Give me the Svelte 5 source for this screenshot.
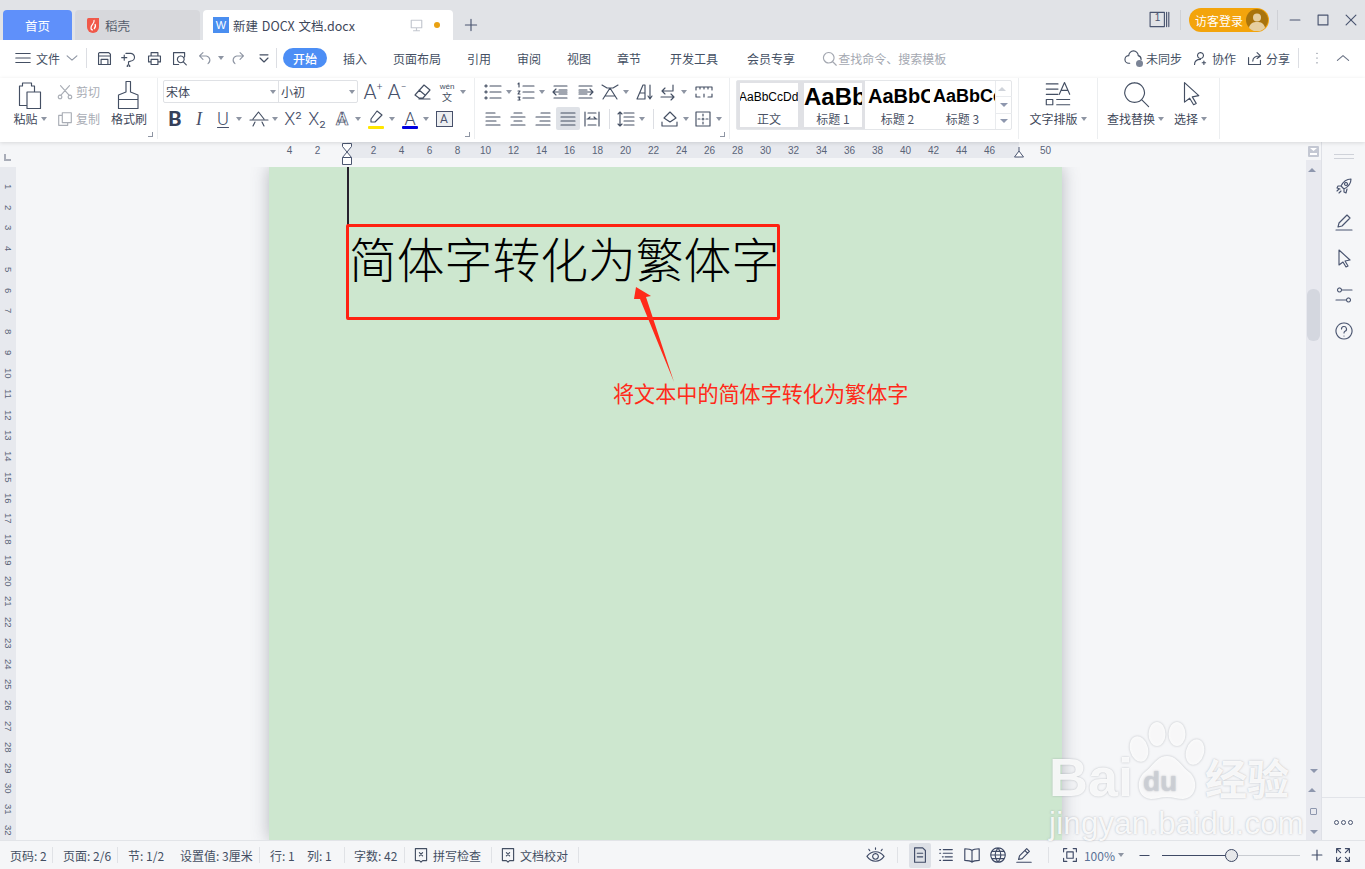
<script>
  const icons = {
    hamb: 'M2 5h16M2 10h16M2 15h16',
    chev: 'M3 7l7 6 7-6',
    chevup: 'M3 13l7-6 7 6',
    save: 'M4 3h11l2 2v12H3V4zM6 17v-6h8v6M3 7h14',
    saveas: 'M7 4h5a4.5 4.5 0 0 1 1 9l-3 1v2M2 9h6M5 6v6M10 17.5a1.5 1.5 0 1 0 .01 0',
    print: 'M6 7V3h8v4M6 14H3V7h14v7h-3M6 11h8v6H6z',
    preview: 'M16 8V3H3v14h6M11.5 7a4 4 0 1 0 .01 0M14.5 14l3.5 3.5',
    undo: 'M7 3L3 7l4 4M3 7h8a5 5 0 0 1 2 9',
    redo: 'M13 3l4 4-4 4M17 7H9a5 5 0 0 0-2 9',
    more: 'M5 6h10M5 10l5 5 5-5',
    cloud: 'M6 15H5a4 4 0 0 1 0-8 5 5 0 0 1 10 0 4 4 0 0 1 3 4',
    user: 'M10 3a3.5 3.5 0 1 0 .01 0M3 17c0-4 3-6 7-6M14 13v4M12 15h4',
    share: 'M3 9v8h14v-5M8 13c0-4 3-6 8-6M13 3l4 4-4 3',
    vdots: 'M10 4v.01M10 10v.01M10 16v.01',
    paste: 'M3 4h2V2h6v2h2v4M3 4v13h5M8 8h9v11H8z',
    cut: 'M5 3l9 10M15 3L6 13M4.5 13.5a2 2 0 1 0 .01 0M15.5 13.5a2 2 0 1 0 .01 0',
    copy: 'M7 3h10v11H7zM7 6H3v11h10v-3',
    brush: 'M8 1h3v7l5 2v3H3v-3l5-2zM3 13h13v6H3z',
    eraser: 'M11 3l6 5-7 8H6l-4-3zM6 8l6 5M6 17h11',
    marker: 'M11 2l5 4-7 7H5v-3z',
    strike: 'M4 10L9.5 3 15 10M1 11h18M4 17l2-4M15 17l-2-4',
    bullets: 'M7 4h11M7 10h11M7 16h11M3 3a1 1 0 1 0 .01 0M3 9a1 1 0 1 0 .01 0M3 15a1 1 0 1 0 .01 0',
    numbers: 'M7 4h11M7 10h11M7 16h11M2 2l1-1v4M2 9h2l-2 3h2M2 15h2l-1 1 1 2H2',
    outdent: 'M4 4h13M9 8h8M3 10h14M3 10l3-3M3 10l3 3M9 12h8M4 16h13',
    indent: 'M3 4h13M3 8h8M3 10h14M17 10l-3-3M17 10l-3 3M3 12h8M3 16h13',
    mixed: 'M2 3l5 3h6l5-3M3 17L10 6l7 11M5 14h10',
    sort: 'M2 17L8 3h2v14H2M5 11h5M15 3v14M13 14l2 3 2-3',
    wrap: 'M15 3v6H4M7 6L4 9l3 3M3 15h13M13 12l3 3-3 3',
    ruler: 'M2 5h16v3M2 5v3M6 5v2M10 5v2M14 5v2M2 12v3h4M18 12v3h-4M10 12v3',
    aleft: 'M3 4h9M3 8h14M3 12h10M3 16h14',
    acenter: 'M6 4h8M3 8h14M6 12h8M3 16h14',
    aright: 'M8 4h9M3 8h14M7 12h10M3 16h14',
    ajust: 'M3 4h14M3 8h14M3 12h14M3 16h14',
    adist: 'M3 3v14M17 3v14M6 4h8M5 10h10M6 16h8M6 10l2-2M14 10l-2-2',
    spacing: 'M4 3v14M2 5l2-2 2 2M2 15l2 2 2-2M8 4h10M8 8h10M8 12h10M8 16h10',
    shade: 'M4 9l6-6 6 6-6 4zM2 13v4h15v-4',
    border: 'M3 3h14v14H3zM10 5v2M10 9v2M10 13v2M5 10h2M9 10h2M13 10h2',
    arrange: 'M1 3h9M1 7h9M1 11h9M1 15h5v4H1zM11 11l4-9 4 9M12.5 8h5M9 15h10M9 19h10',
    search: 'M9 2a7 7 0 1 0 .01 0M14 14l5 5',
    cursor: 'M5 2l11 10-5 1 3 5-2 1-3-5-4 3z',
    rocket: 'M17 3c-5 0-8 3-10 7l3 3c4-2 7-5 7-10zM7 10l-3 0-1 2 3 1M10 13v3l2 1 1-4M12 6.5a1.5 1.5 0 1 0 .01 0M3 15l2-2M5 17l2-2',
    pen: 'M4 15l1-4 8-8 3 3-8 8zM2 18h16',
    sliders: 'M8 5h10M2 15h10M5.5 3a2 2 0 1 0 .01 0M14.5 13a2 2 0 1 0 .01 0',
    help: 'M10 2a8 8 0 1 0 .01 0M7.5 8a2.5 2.5 0 1 1 3.5 2.3c-.7.4-1 .9-1 1.7M10 15v.01',
    check: 'M3 2h14v15h-5l-2 2-2-2H3zM8 7l4 4M12 7l-4 4',
    eye: 'M1 11s3.500-5 9-5 9 5 9 5-3.500 5-9 5-9-5-9-5zM10 8a3 3 0 1 0 .01 0M4 5L3 3.500M10 3.500V2M16 5l1-1.500',
    page: 'M4 2h9l3 3v13H4zM7 8h6M7 12h6',
    outline: 'M3 4h1M7 4h10M3 8h1M7 8h10M6 12h1M9 12h8M3 16h1M7 16h10',
    book: 'M10 5C8 3 5 3 2 3v13c3 0 6 0 8 2 2-2 5-2 8-2V3c-3 0-6 0-8 2zM10 5v13',
    globe: 'M10 2a8 8 0 1 0 .01 0M2 10h16M3 6h14M3 14h14M10 2c-4 5-4 11 0 16M10 2c4 5 4 11 0 16',
    write: 'M4 15l1-4 8-8 3 3-8 8zM2 18h16M11 5l3 3',
    fit: 'M2 6V2h4M14 2h4v4M2 14v4h4M18 14v4h-4M6 6h8v8H6z',
    full: 'M2 7V2h5M2 2l5 5M13 2h5v5M18 2l-5 5M2 13v5h5M2 18l5-5M18 13v5h-5M18 18l-5-5',
    plus: 'M3 10h14M10 3v14',
    min: 'M3 10h14',
    max: 'M3 3h14v14H3z',
    close: 'M3 3l14 14M17 3L3 17',
    monitor: 'M3 3h14v10H3zM10 13v4M6 17h8',
    tabs: 'M1 3h13v13H1zM16 3v13M18 3v13'
  }

  const quick = [
    { i: 'save', w: 24, s: 17 },
    { i: 'saveas', w: 26, s: 17 },
    { i: 'print', w: 25, s: 17 },
    { i: 'preview', w: 26, s: 17 },
    { i: 'undo', w: 32, c: 1, dim: 1, s: 17 },
    { i: 'redo', w: 27, dim: 1, s: 17 },
    { i: 'more', w: 24, s: 16 }
  ]
  const tabs = ['插入', '页面布局', '引用', '审阅', '视图', '章节', '开发工具', '会员专享']

  const fontTop = [
    { t: 'A', sup: '+', cls: 'lg', w: 24 },
    { t: 'A', sup: '−', cls: 'lg', w: 26 },
    { i: 'eraser', w: 24 },
    { wen: 1, w: 34, c: 1 }
  ]
  const fontBottom = [
    { t: 'B', cls: 'bold', w: 24 },
    { t: 'I', cls: 'ital', w: 24 },
    { t: 'U', cls: 'under', w: 36, c: 1 },
    { i: 'strike', w: 34, c: 1 },
    { t: 'X²', w: 24 },
    { t: 'X₂', w: 25 },
    { t: 'A', cls: 'ghost', w: 34, c: 1 },
    { i: 'marker', bar: '#ffe600', w: 34, c: 1 },
    { t: 'A', bar: '#0000e0', w: 34, c: 1 },
    { t: 'A', cls: 'boxed', w: 26 }
  ]
  const paraTop = [
    { i: 'bullets', w: 33, c: 1 },
    { i: 'numbers', w: 34, c: 1 },
    { i: 'outdent', w: 26 },
    { i: 'indent', w: 24 },
    { i: 'mixed', w: 35, c: 1 },
    { i: 'sort', w: 23 },
    { i: 'wrap', w: 36, c: 1 },
    { i: 'ruler', w: 24 }
  ]
  const paraBottom = [
    { i: 'aleft', w: 25 },
    { i: 'acenter', w: 25 },
    { i: 'aright', w: 25 },
    { i: 'ajust', w: 24, on: 1 },
    { i: 'adist', w: 24 },
    { sep: 1, w: 10 },
    { i: 'spacing', w: 34, c: 1 },
    { sep: 1, w: 10 },
    { i: 'shade', w: 33, c: 1 },
    { i: 'border', w: 34, c: 1 }
  ]
  const styles = [
    { p: 'AaBbCcDd', l: '正文', cls: 's0' },
    { p: 'AaBb', l: '标题 1', cls: 's1' },
    { p: 'AaBbC', l: '标题 2', cls: 's2' },
    { p: 'AaBbCc', l: '标题 3', cls: 's3' }
  ]

  const rulerNums = ['4', '2', '', '2', '4', '6', '8', '10', '12', '14', '16', '18', '20', '22', '24', '26', '28', '30', '32', '34', '36', '38', '40', '42', '44', '46', '', '50']
  const sideNums = Array.from({ length: 32 }, (_, i) => i + 1)
  const sideTools = ['rocket', 'pen', 'cursor', 'sliders', 'help']
  const viewTools = ['page', 'outline', 'book', 'globe', 'write']

  const statusItems = [
    { t: '页码: 2', w: 43, m: 10, sep: 1 },
    { t: '页面: 2/6', w: 55, m: 10, sep: 1 },
    { t: '节: 1/2', w: 52, m: 0 },
    { t: '设置值: 3厘米', w: 80, m: 10, sep: 1 },
    { t: '行: 1', w: 37, m: 0 },
    { t: '列: 1', w: 38, m: 9, sep: 1 },
    { t: '字数: 42', w: 51, m: 8, sep: 1 },
    { t: '拼写检查', w: 79, m: 8, sep: 1, check: 1 },
    { t: '文档校对', w: 79, m: 0, sep: 1, check: 1 }
  ]
</script>

{#snippet ic(name, size = 20)}
  <svg class="ic" width={size} height={size} viewBox="0 0 20 20"><path d={icons[name]} /></svg>
{/snippet}

{#snippet caret()}
  <i class="caret"></i>
{/snippet}

{#snippet cells(list)}
  {#each list as c}
    {#if c.sep}
      <span class="cell" style:width="{c.w}px"><i class="vsep"></i></span>
    {:else}
      <span class="cell" class:on={c.on} class:dim={c.dim} style:width="{c.w}px">
        <span class="glyph">
          {#if c.i}
            {@render ic(c.i, c.s ?? 20)}
          {:else if c.wen}
            <span class="wen"><small>wén</small>文</span>
          {:else}
            <span class={['gt', c.cls]}>{c.t}{#if c.sup}<sup>{c.sup}</sup>{/if}</span>
          {/if}
          {#if c.bar}<i class="bar" style:background={c.bar}></i>{/if}
        </span>
        {#if c.c}{@render caret()}{/if}
      </span>
    {/if}
  {/each}
{/snippet}

<div class="app">
  <header class="titlebar">
    <div class="tab home">首页</div>
    <div class="tab shell">
      <svg width="12" height="15" viewBox="0 0 12 15"><path d="M0 1.500Q0 0 1.500 0H12v9a6 6 0 0 1-12 0z" fill="#f0594a" /><path d="M7 2C8 6 4 6 4 10c0 1 1 2 2 2M8 6c1 2 0 4-1 5" fill="none" stroke="#fff" stroke-width="1.200" /></svg>
      稻壳
    </div>
    <div class="tab doc">
      <span class="wlogo">W</span>
      <span class="docname">新建 DOCX 文档.docx</span>
      <span class="mon">{@render ic('monitor', 15)}</span>
      <i class="dot"></i>
    </div>
    <span class="newtab">{@render ic('plus', 16)}</span>
    <div class="winbtns">
      <span class="tabcount">{@render ic('tabs', 22)}<b>1</b></span>
      <i class="tsep"></i>
      <div class="login">
        访客登录
        <svg width="22" height="22" viewBox="0 0 22 22"><circle cx="11" cy="11" r="11" fill="#a9740c" /><circle cx="11" cy="8.500" r="4" fill="#e6cfa0" /><path d="M3 19c1-5 4-6 8-6s7 1 8 6a11 11 0 0 1-16 0z" fill="#e6cfa0" /></svg>
      </div>
      <i class="tsep last"></i>
      <span class="wb">{@render ic('min', 14)}</span>
      <span class="wb">{@render ic('max', 14)}</span>
      <span class="wb">{@render ic('close', 14)}</span>
    </div>
  </header>

  <nav class="menu">
    <span class="hamb">{@render ic('hamb', 18)}</span>
    <span class="file">文件</span>
    <span class="filechev">{@render ic('chev', 14)}</span>
    <i class="msep first"></i>
    <div class="quick">{@render cells(quick)}</div>
    <i class="msep"></i>
    <span class="pill">开始</span>
    <div class="tabs">
      {#each tabs as t}<span class="mtab">{t}</span>{/each}
    </div>
    <div class="search">{@render ic('search', 15)}查找命令、搜索模板</div>
    <div class="actions">
      <span class="act">
        <span class="cloud">{@render ic('cloud', 19)}<i></i></span>未同步
      </span>
      <span class="act">{@render ic('user', 17)}协作</span>
      <span class="act lastact">{@render ic('share', 17)}分享</span>
      <i class="msep"></i>
      <span class="vd">{@render ic('vdots', 16)}</span>
      <span class="up">{@render ic('chevup', 16)}</span>
    </div>
  </nav>

  <section class="ribbon">
    <div class="grp clip">
      <div class="big paste">
        {@render ic('paste', 30)}
        <span class="lbl">粘贴{@render caret()}</span>
      </div>
      <div class="mini">
        <span class="miniitem">{@render ic('cut', 18)}剪切</span>
        <span class="miniitem">{@render ic('copy', 18)}复制</span>
      </div>
      <div class="big brush">
        {@render ic('brush', 30)}
        <span class="lbl">格式刷</span>
      </div>
      <i class="corner"></i>
    </div>

    <div class="grp font">
      <div class="row">
        <div class="combo">
          <span class="cb name">宋体{@render caret()}</span>
          <span class="cb size">小初{@render caret()}</span>
        </div>
        <div class="rowcells">{@render cells(fontTop)}</div>
      </div>
      <div class="row">{@render cells(fontBottom)}</div>
      <i class="corner"></i>
    </div>

    <div class="grp para">
      <div class="row">{@render cells(paraTop)}</div>
      <div class="row">{@render cells(paraBottom)}</div>
      <i class="corner"></i>
    </div>

    <div class="grp gallerygrp">
      <div class="gallery">
        {#each styles as s}
          <div class={['style', s.cls]}>
            <span class="prev">{s.p}</span>
            <span class="slabel">{s.l}</span>
          </div>
        {/each}
        <div class="gscroll">
          <span><i class="tri up"></i></span>
          <span><i class="tri"></i></span>
          <span><i class="tri"></i></span>
        </div>
      </div>
    </div>

    <div class="grp arrange">
      <div class="big">
        {@render ic('arrange', 26)}
        <span class="lbl">文字排版{@render caret()}</span>
      </div>
    </div>

    <div class="grp find">
      <div class="big">
        {@render ic('search', 28)}
        <span class="lbl">查找替换{@render caret()}</span>
      </div>
      <div class="big">
        {@render ic('cursor', 26)}
        <span class="lbl">选择{@render caret()}</span>
      </div>
    </div>
  </section>

  <div class="work">
    <div class="docside">
      <div class="hruler">
        <i class="ltab"></i>
        <div class="hnums">
          {#each rulerNums as n}<span>{n}</span>{/each}
        </div>
        <svg class="mark left" width="12" height="22" viewBox="0 0 12 22"><path d="M1.500.5h9v3L6 9 1.500 3.500zM6 9l4.500 5.500v7h-9v-7zM1.500 14.500h9" fill="#fff" stroke="#4a5570" /></svg>
        <svg class="mark right" width="12" height="12" viewBox="0 0 12 12"><path d="M6 1v4L1.500 11h9L6 5" fill="#fff" stroke="#4a5570" /></svg>
      </div>
      <div class="docrow">
        <div class="vruler">
          {#each sideNums as n}<span>{n}</span>{/each}
        </div>
        <div class="canvas">
          <div class="page">
            <i class="cursorline"></i>
            <div class="redbox">简体字转化为繁体字</div>
          </div>
        </div>
      </div>
    </div>

    <div class="vscroll">
      <div class="scrolltop">
        <svg width="11" height="11" viewBox="0 0 11 11"><rect width="11" height="11" rx="1" fill="#c4c8d3" /><path d="M2 2h7L5.500 5zM2 7h7v2H2z" fill="#fff" /></svg>
      </div>
      <div class="track">
        <i class="tri up"></i>
        <div class="thumb"></div>
        <div class="nav">
          <i class="tri"></i>
          <i class="tri up dbl"></i>
          <i class="ring"></i>
          <i class="tri dbl"></i>
        </div>
      </div>
    </div>

    <aside class="side">
      <div class="grip"></div>
      {#each sideTools as t}
        <span class="stool">{@render ic(t, 20)}</span>
      {/each}
      <div class="sfoot">
        <span class="sdots"><i></i><i></i><i></i></span>
      </div>
    </aside>
  </div>

  <footer class="status">
    {#each statusItems as s}
      <span class="st" class:sep={s.sep} style:width="{s.w}px" style:margin-right="{s.m}px">
        {#if s.check}{@render ic('check', 16)}{/if}{s.t}
      </span>
    {/each}
    <div class="stright">
      <span class="eye">{@render ic('eye', 19)}</span>
      <i class="ssep"></i>
      {#each viewTools as v, i}
        <span class="vt" class:on={i === 0}>{@render ic(v, 18)}</span>
      {/each}
      <i class="ssep two"></i>
      <span class="fit">{@render ic('fit', 16)}</span>
      <span class="pct">100%{@render caret()}</span>
      <span class="zm">{@render ic('min', 13)}</span>
      <div class="slider"><i class="fill"></i><i class="knob"></i></div>
      <span class="zp">{@render ic('plus', 14)}</span>
      <span class="zf">{@render ic('full', 16)}</span>
    </div>
  </footer>

  <!-- annotation drawn over the page -->
  <svg class="arrow" width="60" height="110" viewBox="0 0 60 110"><path d="M16 2L31 11 26 12 54 97 20 14 14 14z" fill="#ff2a1a" /></svg>
  <div class="note">将文本中的简体字转化为繁体字</div>

  <!-- watermark -->
  <div class="wm">
    <svg class="paw" width="80" height="86" viewBox="0 0 80 86">
      <ellipse cx="12" cy="27" rx="9" ry="13" transform="rotate(-15 12 27)" />
      <ellipse cx="30" cy="12" rx="8.500" ry="12" />
      <ellipse cx="50" cy="12" rx="8.500" ry="12" />
      <ellipse cx="68" cy="30" rx="9" ry="13" transform="rotate(15 68 30)" />
      <path d="M40 34c10 0 14 10 22 16 10 8 8 26-6 27-6 0-10-2-16-2s-10 2-16 2c-14-1-16-19-6-27 8-6 12-16 22-16z" />
    </svg>
    <span class="bai">Bai</span>
    <span class="du">du</span>
    <span class="jy">经验</span>
    <span class="url">jingyan.baidu.com</span>
  </div>
</div>

<style>
  :global(body) {
    margin: 0;
    background: #f5f6f8;
  }
  .app {
    position: relative;
    width: 1365px;
    height: 869px;
    overflow: hidden;
    display: flex;
    flex-direction: column;
    font-family: "Noto Sans CJK SC", "Noto Sans", sans-serif;
    font-size: 12px;
    color: #444f63;
  }
  i { display: block; font-style: normal; }
  .ic {
    flex: none;
    display: block;
    fill: none;
    stroke: currentColor;
  }
  .ic path {
    vector-effect: non-scaling-stroke;
    stroke-width: 1.15;
    stroke-linecap: round;
    stroke-linejoin: round;
  }
  .caret {
    width: 0;
    height: 0;
    flex: none;
    border: 3.5px solid transparent;
    border-top: 4px solid #8e95a3;
    border-bottom: 0;
    margin-left: 3px;
  }

  /* title bar */
  .titlebar {
    height: 40px;
    flex: none;
    background: #e1e3e7;
    display: flex;
    align-items: flex-end;
    padding-left: 3px;
    box-sizing: border-box;
  }
  .tab {
    height: 30px;
    display: flex;
    align-items: center;
    box-sizing: border-box;
    border-radius: 4px 4px 0 0;
    font-size: 12.500px;
  }
  .home {
    width: 69px;
    justify-content: center;
    background: #5f90fa;
    color: #fff;
  }
  .shell {
    width: 125px;
    margin-left: 3px;
    padding-left: 12px;
    gap: 6px;
    background: #d7d8dc;
    color: #555d6c;
  }
  .doc {
    width: 250px;
    margin-left: 3px;
    padding-left: 10px;
    background: #fff;
    color: #3e4759;
  }
  .wlogo {
    width: 16px;
    height: 16px;
    background: #4a8ef0;
    color: #fff;
    font: 11px "Liberation Sans", sans-serif;
    display: flex;
    align-items: center;
    justify-content: center;
  }
  .docname { margin-left: 4px; width: 173px; white-space: nowrap; word-spacing: 1px; }
  .mon { color: #c3c7cf; margin-left: 3px; }
  .dot {
    width: 6px;
    height: 6px;
    margin-left: 10px;
    border-radius: 50%;
    background: #e9a112;
  }
  .newtab {
    height: 30px;
    display: flex;
    align-items: center;
    margin-left: 10px;
    color: #4a5570;
  }
  .winbtns {
    margin-left: auto;
    height: 40px;
    display: flex;
    align-items: center;
    color: #4a5570;
  }
  .tabcount { position: relative; width: 22px; margin-right: 9px; }
  .tabcount b {
    position: absolute;
    left: 2px;
    top: 3px;
    width: 13px;
    text-align: center;
    font: 10px "Liberation Sans", sans-serif;
  }
  .tsep { width: 1px; height: 20px; background: #cfd1d6; }
  .tsep.last { margin-right: 3px; }
  .login {
    width: 80px;
    height: 24px;
    margin: 0 8px;
    padding: 0 1px 0 6px;
    box-sizing: border-box;
    display: flex;
    align-items: center;
    justify-content: space-between;
    border-radius: 12px;
    background: #f3a40c;
    color: #fff;
    font-size: 12px;
  }
  .wb { width: 28px; display: flex; justify-content: center; }

  /* menu row */
  .menu {
    height: 38px;
    flex: none;
    background: #fff;
    display: flex;
    align-items: center;
    padding: 0 0 2px 14px;
    box-sizing: border-box;
  }
  .file { margin-left: 4px; width: 24px; white-space: nowrap; }
  .filechev { margin-left: 5px; color: #8e95a3; }
  .msep { width: 1px; height: 20px; background: #dcdee3; }
  .msep.first { margin-left: 7px; margin-right: 5px; }
  .quick { display: flex; }
  .cell {
    height: 23px;
    display: flex;
    align-items: center;
    padding-left: 2px;
    box-sizing: border-box;
    flex: none;
  }
  .cell.dim { color: #8e95a3; }
  .cell.on { background: #dfe2e7; border-radius: 2px; }
  .glyph {
    position: relative;
    width: 20px;
    height: 20px;
    flex: none;
    display: flex;
    align-items: center;
    justify-content: center;
  }
  .gt {
    font: 300 18px/20px Roboto, "Liberation Sans", sans-serif;
    color: #47506a;
  }
  .gt sup { font-size: 10px; line-height: 0; vertical-align: 9px; }
  .gt.lg { font-size: 21px; }
  .gt.bold { font-weight: 700; font-size: 21px; color: #36405a; }
  .gt.ital { font-style: italic; font-size: 18px; font-family: "Liberation Serif", serif; }
  .gt.under { text-decoration: underline; text-underline-offset: 2px; font-size: 18px; }
  .gt.ghost { font-weight: 700; color: #f5f6f8; -webkit-text-stroke: 0.7px #47506a; font-size: 18px; }
  .gt.boxed {
    font-size: 12px;
    line-height: 14px;
    font-weight: 400;
    width: 15px;
    text-align: center;
    border: 1px solid #47506a;
    background: #eceef1;
  }
  .bar {
    position: absolute;
    left: 2px;
    right: 2px;
    bottom: 0;
    height: 3px;
    border-radius: 1px;
  }
  .vsep { width: 1px; height: 20px; background: #dcdee3; margin-left: 3px; }
  .wen {
    display: flex;
    flex-direction: column;
    align-items: center;
    font-size: 10px;
    line-height: 11px;
  }
  .wen small { font: 8px/9px "Liberation Sans", sans-serif; }
  .pill {
    margin-left: 6px;
    width: 44px;
    height: 20px;
    border-radius: 10px;
    background: #4c8ef5;
    color: #fff;
    display: flex;
    align-items: center;
    justify-content: center;
    font-weight: 500;
  }
  .tabs { display: flex; gap: 26px; margin-left: 16px; }
  .mtab { white-space: nowrap; }
  .mtab:nth-child(7), .mtab:nth-child(8) { margin-left: 3px; }
  .search {
    margin-left: 27px;
    display: flex;
    align-items: center;
    gap: 1px;
    color: #a4a8b1;
    white-space: nowrap;
  }
  .actions {
    margin-left: auto;
    display: flex;
    align-items: center;
  }
  .act {
    display: flex;
    align-items: center;
    gap: 3px;
    margin-right: 10px;
    white-space: nowrap;
  }
  .act.lastact { margin-right: 8px; }
  .cloud { position: relative; }
  .cloud i {
    position: absolute;
    right: 0;
    bottom: 1px;
    width: 7px;
    height: 7px;
    border-radius: 50%;
    background: #7b8496;
  }
  .vd { margin-left: 10px; }
  .up { margin: 0 14px 0 10px; color: #6c7486; }

  /* ribbon */
  .ribbon {
    height: 64px;
    flex: none;
    display: flex;
    background: #fff;
    box-shadow: 0 1px 4px rgba(0, 0, 0, 0.12);
    position: relative;
    z-index: 2;
  }
  .grp {
    position: relative;
    height: 61px;
    box-sizing: border-box;
    padding-top: 2px;
    border-right: 1px solid #eceef0;
    flex: none;
  }
  .corner {
    position: absolute;
    right: 4px;
    bottom: 2px;
    width: 4px;
    height: 4px;
    border-right: 1px solid #8e95a3;
    border-bottom: 1px solid #8e95a3;
  }
  .clip {
    width: 158px;
    display: flex;
    padding-left: 13px;
  }
  .big {
    display: flex;
    flex-direction: column;
    align-items: center;
    justify-content: space-between;
    height: 48px;
    white-space: nowrap;
  }
  .lbl {
    display: flex;
    align-items: center;
    line-height: 18px;
    color: #3e4759;
  }
  .paste { width: 34px; }
  .mini {
    width: 54px;
    margin-left: 9px;
    display: flex;
    flex-direction: column;
    justify-content: space-between;
    height: 50px;
  }
  .miniitem {
    display: flex;
    align-items: center;
    gap: 2px;
    height: 23px;
    color: #a9adb5;
    white-space: nowrap;
  }
  .brush { width: 36px; margin-left: 1px; }

  .font { width: 317px; padding-left: 5px; }
  .row { display: flex; height: 23px; margin-bottom: 4px; align-items: center; }
  .rowcells { display: flex; margin-left: 3px; }
  .combo {
    width: 195px;
    height: 23px;
    display: flex;
    box-sizing: border-box;
    border: 1px solid #dfe1e5;
    border-radius: 2px;
  }
  .cb {
    display: flex;
    align-items: center;
    justify-content: space-between;
    padding: 0 2px;
    box-sizing: border-box;
    color: #3e4759;
  }
  .name { width: 115px; border-right: 1px solid #dfe1e5; }
  .size { width: 78px; }

  .para { width: 255px; padding-left: 6px; }

  .gallerygrp { width: 289px; padding-left: 6px; }
  .gallery {
    width: 276px;
    height: 50px;
    display: flex;
    box-sizing: border-box;
    border: 1px solid #e4e6e9;
    border-radius: 2px;
  }
  .style {
    width: 65px;
    height: 48px;
    box-sizing: border-box;
    overflow: hidden;
    display: flex;
    flex-direction: column;
    align-items: center;
    flex: none;
    color: #000;
  }
  .s0, .s1 { width: 64px; border: 3px solid #e0e1e5; border-top-width: 2px; border-bottom-width: 2px; }
  .prev {
    height: 30px;
    align-self: flex-start;
    display: flex;
    align-items: center;
    font-family: "Liberation Sans", sans-serif;
    white-space: nowrap;
  }
  .s0 .prev { font-size: 12px; height: 28px; margin-left: -1px; }
  .s1 .prev { font-size: 24px; font-weight: 700; height: 28px; }
  .s2 .prev { font-size: 20px; font-weight: 700; padding-left: 3px; }
  .s3 .prev { font-size: 18px; font-weight: 700; padding-left: 3px; }
  .slabel { color: #4a5265; line-height: 16px; white-space: nowrap; }
  .gscroll {
    width: 16px;
    margin-left: auto;
    display: flex;
    flex-direction: column;
    border-left: 1px solid #e9ebee;
  }
  .gscroll span {
    flex: 1;
    display: flex;
    align-items: center;
    justify-content: center;
    border-bottom: 1px solid #e9ebee;
  }
  .gscroll span:last-child { border: 0; }
  .tri {
    width: 0;
    height: 0;
    border: 4px solid transparent;
    border-top: 4px solid #8e97ae;
    border-bottom: 0;
  }
  .tri.up {
    border-top: 0;
    border-bottom: 4px solid #8e97ae;
  }
  .gscroll span:first-child .tri.up { border-bottom-color: #cfd3da; }

  .arrange {
    width: 79px;
    display: flex;
    justify-content: center;
  }
  .find {
    width: 122px;
    display: flex;
    padding-left: 9px;
    gap: 10px;
  }

  /* workspace */
  .work {
    flex: 1;
    min-height: 0;
    display: flex;
    background: #f5f6f8;
  }
  .docside {
    width: 1306px;
    flex: none;
    display: flex;
    flex-direction: column;
  }
  .hruler {
    position: relative;
    height: 25px;
    flex: none;
    background: linear-gradient(to right, transparent 347px, #e7e9ee 347px, #e7e9ee 1019px, transparent 1019px) no-repeat;
    background-size: 100% 16px;
  }
  .ltab {
    position: absolute;
    left: 4px;
    top: 12px;
    width: 5px;
    height: 5px;
    border-left: 2px solid #a9adb8;
    border-bottom: 2px solid #a9adb8;
  }
  .hnums {
    display: flex;
    padding-left: 275.500px;
    height: 16px;
    align-items: center;
    font: 10px "Liberation Sans", sans-serif;
    color: #5a6478;
  }
  .hnums span { width: 28px; text-align: center; flex: none; }
  .mark { position: absolute; }
  .mark.left { left: 341px; top: 1px; }
  .mark.right { left: 1013px; top: 4px; }

  .docrow { flex: 1; min-height: 0; display: flex; }
  .vruler {
    width: 16px;
    flex: none;
    background: #e7e9ee;
    box-sizing: border-box;
    padding-top: 9px;
    overflow: hidden;
    display: flex;
    flex-direction: column;
    align-items: center;
    font: 9.500px "Liberation Sans", sans-serif;
    color: #5a6478;
  }
  .vruler span {
    height: 20.770px;
    flex: none;
    writing-mode: vertical-rl;
    text-align: center;
  }
  .canvas { flex: 1; min-width: 0; overflow: hidden; padding-left: 253px; }
  .page {
    width: 793px;
    height: 100%;
    background: #cde7cf;
    box-shadow: 0 0 16px rgba(70, 75, 90, 0.36);
    padding-left: 77px;
    box-sizing: border-box;
  }
  .cursorline {
    width: 2px;
    height: 58px;
    margin-left: 1px;
    background: #26222e;
  }
  .redbox {
    width: 434px;
    height: 96px;
    box-sizing: border-box;
    border: 3px solid #ff2212;
    border-radius: 2px;
    margin-top: -1px;
    font-size: 47.800px;
    line-height: 62px;
    font-weight: 300;
    color: #000;
    white-space: nowrap;
  }

  .vscroll {
    width: 15px;
    flex: none;
    display: flex;
    flex-direction: column;
    border-right: 1px solid #dfe1e7;
  }
  .scrolltop {
    height: 18px;
    flex: none;
    display: flex;
    justify-content: center;
    padding-top: 4px;
    box-sizing: border-box;
  }
  .track {
    flex: 1;
    background: #e8e9ef;
    display: flex;
    flex-direction: column;
    align-items: center;
    padding-top: 8px;
  }
  .thumb {
    width: 13px;
    height: 52px;
    margin-top: 117px;
    border-radius: 6px;
    background: #d4d7df;
  }
  .nav {
    margin-top: auto;
    height: 65px;
    margin-bottom: 6px;
    display: flex;
    flex-direction: column;
    align-items: center;
    justify-content: space-between;
  }
  .ring {
    width: 5px;
    height: 5px;
    border: 1px solid #8e97ae;
    border-radius: 1px;
  }
  .tri.dbl { box-shadow: 0 -3px 0 -2px #8e97ae; }

  .side {
    flex: 1;
    display: flex;
    flex-direction: column;
    align-items: center;
    color: #4a5570;
  }
  .grip {
    width: 20px;
    height: 3px;
    margin-top: 12px;
    margin-bottom: 9px;
    border-top: 1px solid #cfd2d9;
    border-bottom: 1px solid #cfd2d9;
  }
  .stool {
    height: 36.200px;
    display: flex;
    align-items: center;
  }
  .sfoot {
    margin-top: auto;
    width: 100%;
    height: 43px;
    padding-top: 7px;
    border-top: 1px solid #e2e4e9;
    display: flex;
    justify-content: center;
    align-items: center;
    box-sizing: border-box;
  }
  .sdots { display: flex; gap: 2px; }
  .sdots i {
    width: 3px;
    height: 3px;
    border: 1px solid #4a5570;
    border-radius: 50%;
  }

  /* status bar */
  .status {
    height: 29px;
    flex: none;
    box-sizing: border-box;
    border-top: 1px solid #e2e4e8;
    background: #f5f6f8;
    display: flex;
    align-items: center;
    padding-left: 10px;
    position: relative;
    z-index: 2;
    white-space: nowrap;
  }
  .st {
    display: flex;
    align-items: center;
    gap: 4px;
    height: 16px;
    flex: none;
    box-sizing: border-box;
  }
  .st.sep { border-right: 1px solid #e0e2e6; }
  .stright {
    margin-left: auto;
    display: flex;
    align-items: center;
    color: #3f4a66;
  }
  .eye { margin-right: 12px; }
  .ssep { width: 1px; height: 16px; background: #e0e2e6; margin-right: 11px; }
  .ssep.two { margin: 0 13px 0 9px; }
  .vt {
    width: 22px;
    height: 25px;
    margin-right: 4px;
    display: flex;
    align-items: center;
    justify-content: center;
  }
  .vt.on { background: #dde0e6; border-radius: 2px; }
  .fit { margin-right: 6px; }
  .pct { display: flex; align-items: center; color: #5a7196; margin-right: 14px; }
  .slider {
    position: relative;
    width: 138px;
    height: 1px;
    margin: 0 10px 0 11px;
    background: #c9ccd2;
  }
  .fill { width: 69px; height: 1px; background: #3f4a66; }
  .knob {
    position: absolute;
    left: 63px;
    top: -6px;
    width: 11px;
    height: 11px;
    border: 1px solid #3f4a66;
    border-radius: 50%;
    background: #e7e8ea;
  }
  .zf { margin: 0 14px 0 11px; }

  /* overlays */
  .arrow { position: absolute; left: 620px; top: 285px; z-index: 3; }
  .note {
    position: absolute;
    left: 613px;
    top: 377px;
    z-index: 3;
    font-size: 21.100px;
    line-height: 32px;
    color: #ff2a1a;
    white-space: nowrap;
  }
  .wm {
    position: absolute;
    left: 1049px;
    top: 722px;
    width: 250px;
    height: 120px;
    z-index: 4;
    color: rgba(255, 255, 255, 0.88);
    font-family: "Liberation Sans", sans-serif;
    text-shadow: 0 0 2px rgba(120, 125, 135, 0.5);
  }
  .paw {
    position: absolute;
    left: 78px;
    top: 0;
    fill: rgba(255, 255, 255, 0.88);
    filter: drop-shadow(0 0 1px rgba(120, 125, 135, 0.5));
  }
  .wm span { position: absolute; white-space: nowrap; }
  .bai { left: 0; top: 24px; font-size: 54px; line-height: 62px; font-weight: 700; }
  .du {
    left: 94px;
    top: 44px;
    font-size: 28px;
    line-height: 32px;
    font-weight: 700;
    color: rgba(205, 208, 214, 0.9);
  }
  .jy {
    left: 156px;
    top: 30px;
    font: 700 42px/50px "Noto Sans CJK SC", sans-serif;
  }
  .url { left: 0; top: 84px; font-size: 31px; line-height: 36px; letter-spacing: 0.3px; }
</style>
